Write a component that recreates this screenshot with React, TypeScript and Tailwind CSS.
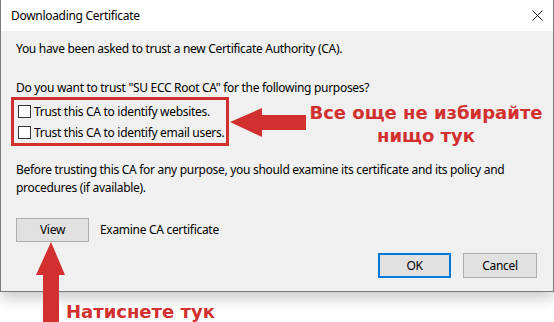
export default function App() {
  return (
    <div className="relative w-[554px] h-[322px] overflow-hidden bg-white font-['Noto_Sans',sans-serif] text-[12px] tracking-[-0.3px] text-black">
      {/* Dialog window */}
      <div className="w-[554px] h-[292px] flex flex-col border-x border-b border-[#7a7a7a] bg-[#f0f0f0] shadow-[0_6px_14px_rgba(0,0,0,0.22)]">
        {/* Title bar */}
        <div className="h-[31px] bg-white flex items-center justify-between pl-[10px] pr-[9px] shrink-0">
          <span className="leading-[18px]">Downloading Certificate</span>
          <svg width="11" height="11" viewBox="0 0 11 11" className="mr-[1px]">
            <path d="M0.5 0.5 L10.5 10.5 M10.5 0.5 L0.5 10.5" stroke="#111" strokeWidth="1" />
          </svg>
        </div>

        <div className="flex-1 flex flex-col pl-[15px] pr-[15px]">
          <p className="mt-[9px] leading-[18px]">You have been asked to trust a new Certificate Authority (CA).</p>
          <p className="mt-[21px] leading-[18px]">Do you want to trust "SU ECC Root CA" for the following purposes?</p>

          {/* Highlighted purposes */}
          <div className="ml-[-5px] w-[218px] h-[49px] border-[3px] border-[#d22f2f] pt-[1px] pl-[4px] flex flex-col">
            <label className="h-[21px] flex items-center gap-[3px] whitespace-nowrap">
              <span className="w-[13px] h-[13px] border border-[#333] bg-white shrink-0" />
              <span className="leading-[18px]">Trust this CA to identify websites.</span>
            </label>
            <label className="h-[21px] flex items-center gap-[3px] whitespace-nowrap">
              <span className="w-[13px] h-[13px] border border-[#333] bg-white shrink-0" />
              <span className="leading-[18px]">Trust this CA to identify email users.</span>
            </label>
          </div>

          <p className="mt-[15px] leading-[18px]">
            Before trusting this CA for any purpose, you should examine its certificate and its policy and procedures (if available).
          </p>

          <div className="mt-[21px] flex items-center">
            <button className="w-[73px] h-[24px] bg-[#e1e1e1] border border-[#adadad] leading-[18px]">View</button>
            <span className="ml-[11px] leading-[18px]">Examine CA certificate</span>
          </div>

          <div className="mt-[11px] flex justify-end gap-[12px] mr-[1px]">
            <button className="w-[73px] h-[25px] bg-[#e1e1e1] border-2 border-[#0078d7] leading-[18px]">OK</button>
            <button className="w-[74px] h-[25px] bg-[#e1e1e1] border border-[#adadad] leading-[18px]">Cancel</button>
          </div>
        </div>
      </div>

      {/* Annotation: left arrow */}
      <svg className="absolute left-[228px] top-[106px]" width="80" height="33" viewBox="0 0 80 33">
        <polygon points="2,16 34,2 34,9 78,9 78,24 34,24 34,31" fill="#d22f2f" />
      </svg>
      <div className="absolute left-[300px] top-[101px] w-[252px] text-center font-['DejaVu_Sans',sans-serif] font-bold text-[18px] tracking-normal leading-[23px] text-[#d22f2f]">
        Все още не избирайте
        <br />
        нищо тук
      </div>

      {/* Annotation: up arrow */}
      <svg className="absolute left-[34px] top-[240px]" width="33" height="82" viewBox="0 0 33 82">
        <polygon points="17,2 31,35 25,35 25,82 9,82 9,35 2,35" fill="#d22f2f" />
      </svg>
      <div className="absolute left-[66px] top-[301px] font-['DejaVu_Sans',sans-serif] font-bold text-[18px] tracking-normal leading-[22px] text-[#d22f2f] whitespace-nowrap">
        Натиснете тук
      </div>
    </div>
  );
}
